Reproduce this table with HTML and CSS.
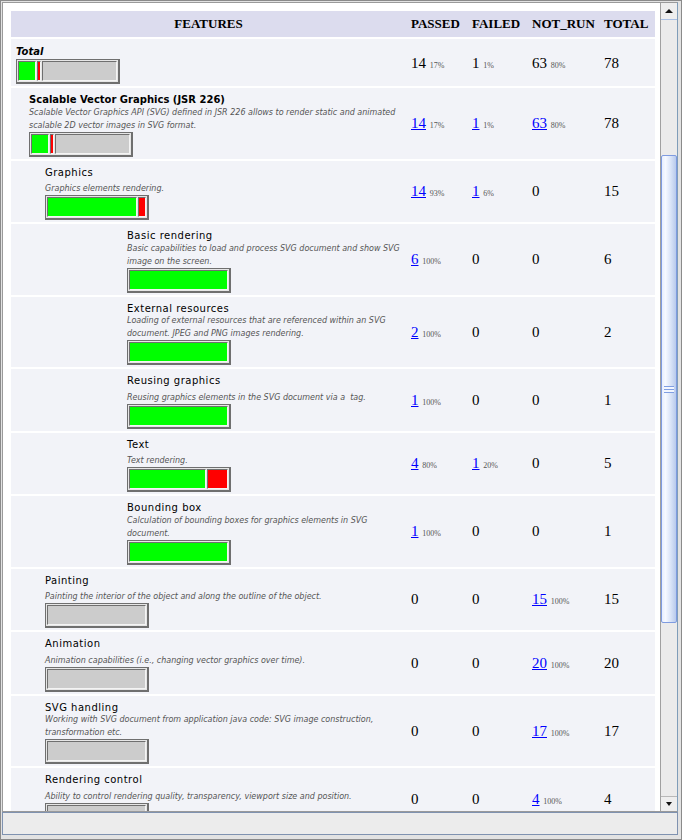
FILE: index.html
```html
<!DOCTYPE html>
<html>
<head>
<meta charset="utf-8">
<link rel="stylesheet" href="styles.css">
</head>
<body>
<div class="window">
  <div class="pane">
    <div class="viewport">
      <table class="report">
        <colgroup>
          <col class="c-feat"><col class="c-pass"><col class="c-fail"><col class="c-nr"><col class="c-tot">
        </colgroup>
        <thead>
          <tr><th class="feat">FEATURES</th><th>PASSED</th><th>FAILED</th><th>NOT_RUN</th><th>TOTAL</th></tr>
        </thead>
        <tbody>
          <tr>
            <td class="f lv0"><div class="t0">Total</div>
              <div class="bar"><span class="g" style="flex:14"></span><span class="r" style="flex:1"></span><span class="n" style="flex:63"></span></div></td>
            <td class="num">14 <small>17%</small></td><td class="num">1 <small>1%</small></td><td class="num">63 <small>80%</small></td><td class="num">78</td>
          </tr>
          <tr>
            <td class="f lv1"><div class="t1">Scalable Vector Graphics (JSR 226)</div>
              <div class="d">Scalable Vector Graphics API (SVG) defined in JSR 226 allows to render static and animated<br>scalable 2D vector images in SVG format.</div>
              <div class="bar"><span class="g" style="flex:14"></span><span class="r" style="flex:1"></span><span class="n" style="flex:63"></span></div></td>
            <td class="num"><a href="#">14</a> <small>17%</small></td><td class="num"><a href="#">1</a> <small>1%</small></td><td class="num"><a href="#">63</a> <small>80%</small></td><td class="num">78</td>
          </tr>
          <tr>
            <td class="f lv2"><div class="t2">Graphics</div>
              <div class="d one">Graphics elements rendering.</div>
              <div class="bar"><span class="g" style="flex:14"></span><span class="r" style="flex:1"></span></div></td>
            <td class="num"><a href="#">14</a> <small>93%</small></td><td class="num"><a href="#">1</a> <small>6%</small></td><td class="num">0</td><td class="num">15</td>
          </tr>
          <tr>
            <td class="f lv3"><div class="t2">Basic rendering</div>
              <div class="d">Basic capabilities to load and process SVG document and show SVG<br>image on the screen.</div>
              <div class="bar"><span class="g" style="flex:1"></span></div></td>
            <td class="num"><a href="#">6</a> <small>100%</small></td><td class="num">0</td><td class="num">0</td><td class="num">6</td>
          </tr>
          <tr>
            <td class="f lv3"><div class="t2">External resources</div>
              <div class="d">Loading of external resources that are referenced within an SVG<br>document. JPEG and PNG images rendering.</div>
              <div class="bar"><span class="g" style="flex:1"></span></div></td>
            <td class="num"><a href="#">2</a> <small>100%</small></td><td class="num">0</td><td class="num">0</td><td class="num">2</td>
          </tr>
          <tr>
            <td class="f lv3"><div class="t2">Reusing graphics</div>
              <div class="d one">Reusing graphics elements in the SVG document via a&nbsp; tag.</div>
              <div class="bar"><span class="g" style="flex:1"></span></div></td>
            <td class="num"><a href="#">1</a> <small>100%</small></td><td class="num">0</td><td class="num">0</td><td class="num">1</td>
          </tr>
          <tr>
            <td class="f lv3"><div class="t2">Text</div>
              <div class="d one">Text rendering.</div>
              <div class="bar"><span class="g" style="flex:4"></span><span class="r" style="flex:1"></span></div></td>
            <td class="num"><a href="#">4</a> <small>80%</small></td><td class="num"><a href="#">1</a> <small>20%</small></td><td class="num">0</td><td class="num">5</td>
          </tr>
          <tr>
            <td class="f lv3"><div class="t2">Bounding box</div>
              <div class="d">Calculation of bounding boxes for graphics elements in SVG<br>document.</div>
              <div class="bar"><span class="g" style="flex:1"></span></div></td>
            <td class="num"><a href="#">1</a> <small>100%</small></td><td class="num">0</td><td class="num">0</td><td class="num">1</td>
          </tr>
          <tr>
            <td class="f lv2"><div class="t2">Painting</div>
              <div class="d one">Painting the interior of the object and along the outline of the object.</div>
              <div class="bar"><span class="n" style="flex:1"></span></div></td>
            <td class="num">0</td><td class="num">0</td><td class="num"><a href="#">15</a> <small>100%</small></td><td class="num">15</td>
          </tr>
          <tr>
            <td class="f lv2"><div class="t2">Animation</div>
              <div class="d one">Animation capabilities (i.e., changing vector graphics over time).</div>
              <div class="bar"><span class="n" style="flex:1"></span></div></td>
            <td class="num">0</td><td class="num">0</td><td class="num"><a href="#">20</a> <small>100%</small></td><td class="num">20</td>
          </tr>
          <tr>
            <td class="f lv2"><div class="t2">SVG handling</div>
              <div class="d">Working with SVG document from application java code: SVG image construction,<br>transformation etc.</div>
              <div class="bar"><span class="n" style="flex:1"></span></div></td>
            <td class="num">0</td><td class="num">0</td><td class="num"><a href="#">17</a> <small>100%</small></td><td class="num">17</td>
          </tr>
          <tr>
            <td class="f lv2"><div class="t2">Rendering control</div>
              <div class="d one">Ability to control rendering quality, transparency, viewport size and position.</div>
              <div class="bar"><span class="n" style="flex:1"></span></div></td>
            <td class="num">0</td><td class="num">0</td><td class="num"><a href="#">4</a> <small>100%</small></td><td class="num">4</td>
          </tr>
        </tbody>
      </table>
    </div>
    <div class="vscroll">
      <div class="sbtn up"><span class="tri-up"></span></div>
      <div class="track">
        <div class="thumb"><span class="grip"></span></div>
      </div>
      <div class="sbtn down"><span class="tri-down"></span></div>
    </div>
  </div>
  <div class="status"></div>
</div>
</body>
</html>
```

FILE: styles.css
```css
html, body {
  margin: 0;
  padding: 0;
  background: #d6d6d6;
}
.window {
  box-sizing: border-box;
  width: 682px;
  height: 840px;
  border: 1px solid #8a8a8a;
  padding: 1px 3px 4px 1px;
  background: #e2e2e2;
  display: flex;
  flex-direction: column;
}
.pane {
  flex: 1;
  min-height: 0;
  display: flex;
  border: 1px solid #9a9a9a;
  border-right-color: #7f9db9;
  background: #ffffff;
  overflow: hidden;
}
.viewport {
  flex: 1;
  min-width: 0;
  padding: 8px 5px 0 8px;
  overflow: hidden;
}
.report {
  width: 644px;
  table-layout: fixed;
  border-collapse: separate;
  border-spacing: 0;
}
.c-feat { width: 395px; }
.c-pass { width: 61px; }
.c-fail { width: 60px; }
.c-nr { width: 72px; }
.c-tot { width: 56px; }

.report th {
  background: #dcdcee;
  height: 28px;
  padding: 0 0 0 5px;
  border-bottom: 2px solid #ffffff;
  font: bold 13px "Liberation Serif", "Times New Roman", serif;
  color: #000;
  text-align: left;
  vertical-align: middle;
  box-sizing: border-box;
}
.report th.feat {
  text-align: center;
  padding: 0;
}
.report td {
  background: #f2f3f8;
  border-bottom: 2px solid #ffffff;
  padding: 0;
}
.report td.f {
  vertical-align: top;
  padding-top: 6px;
  padding-bottom: 2px;
  font-family: "DejaVu Sans", Verdana, sans-serif;
  color: #000;
}
.report td.lv0 { padding-left: 5px; }
.report td.lv1 { padding-left: 18px; }
.report td.lv2 { padding-left: 34px; }
.report td.lv3 { padding-left: 116px; }

.t0 {
  font-size: 10px;
  font-weight: bold;
  font-style: italic;
  line-height: 14px;
}
.t1 {
  font-size: 10px;
  font-weight: bold;
  line-height: 11.5px;
}
.t2 {
  font-size: 10px;
  letter-spacing: 0.5px;
  line-height: 11.5px;
}
.d {
  font-size: 8px;
  font-style: italic;
  color: #555555;
  line-height: 13px;
  white-space: nowrap;
}
.d.one { padding-top: 4px; }

.bar {
  box-sizing: border-box;
  width: 104px;
  height: 25px;
  display: flex;
  gap: 1px;
  border: 1px solid #6f6f6f;
  border-right-width: 2px;
  border-bottom-width: 2px;
  padding: 1px;
  background: #e6e6e6;
}
.bar span {
  min-width: 0;
  flex-basis: 0;
  border: 1px solid;
  border-color: #6f6f6f #f4f4f4 #f4f4f4 #6f6f6f;
}
.bar .g { background: #00ff00; }
.bar .r { background: #ff0000; }
.bar .n { background: #cccccc; }

.report td.num {
  vertical-align: middle;
  padding-left: 5px;
  padding-top: 1px;
  font: 15px "Liberation Serif", "Times New Roman", serif;
  color: #000;
  white-space: nowrap;
}
.num a {
  color: #0000ff;
  text-decoration: underline;
}
.num small {
  font-size: 8px;
  color: #555555;
}

.vscroll {
  width: 16px;
  border-left: 1px solid #a0a0a0;
  background: #ededed;
  display: flex;
  flex-direction: column;
}
.sbtn {
  height: 16px;
  display: flex;
  align-items: center;
  justify-content: center;
  background: #eeeeee;
  flex: none;
}
.sbtn.up { border-bottom: 1px solid #a9bfe4; }
.sbtn.down { border-top: 1px solid #b8b8b8; height: 14px; }
.tri-up {
  width: 0; height: 0;
  border-left: 4px solid transparent;
  border-right: 4px solid transparent;
  border-bottom: 4px solid #111;
}
.tri-down {
  width: 0; height: 0;
  border-left: 3.5px solid transparent;
  border-right: 3.5px solid transparent;
  border-top: 4px solid #111;
}
.track {
  flex: 1;
  padding-top: 135px;
  padding-bottom: 173px;
  background: #ebebeb;
}
.thumb {
  box-sizing: border-box;
  height: 100%;
  border: 1px solid #7e9be0;
  border-radius: 2px;
  background: linear-gradient(to right, #e6eeff 0%, #f6f9ff 25%, #dbe5f8 60%, #b8caec 100%);
  display: flex;
  align-items: center;
  justify-content: center;
}
.grip {
  width: 10px;
  height: 7px;
  background: repeating-linear-gradient(to bottom, #7f9ee2 0 1px, #f2f6ff 1px 3px);
}
.status {
  height: 21px;
  flex: none;
  border: 1px solid #7f92b0;
  background: #ececec;
}
```
